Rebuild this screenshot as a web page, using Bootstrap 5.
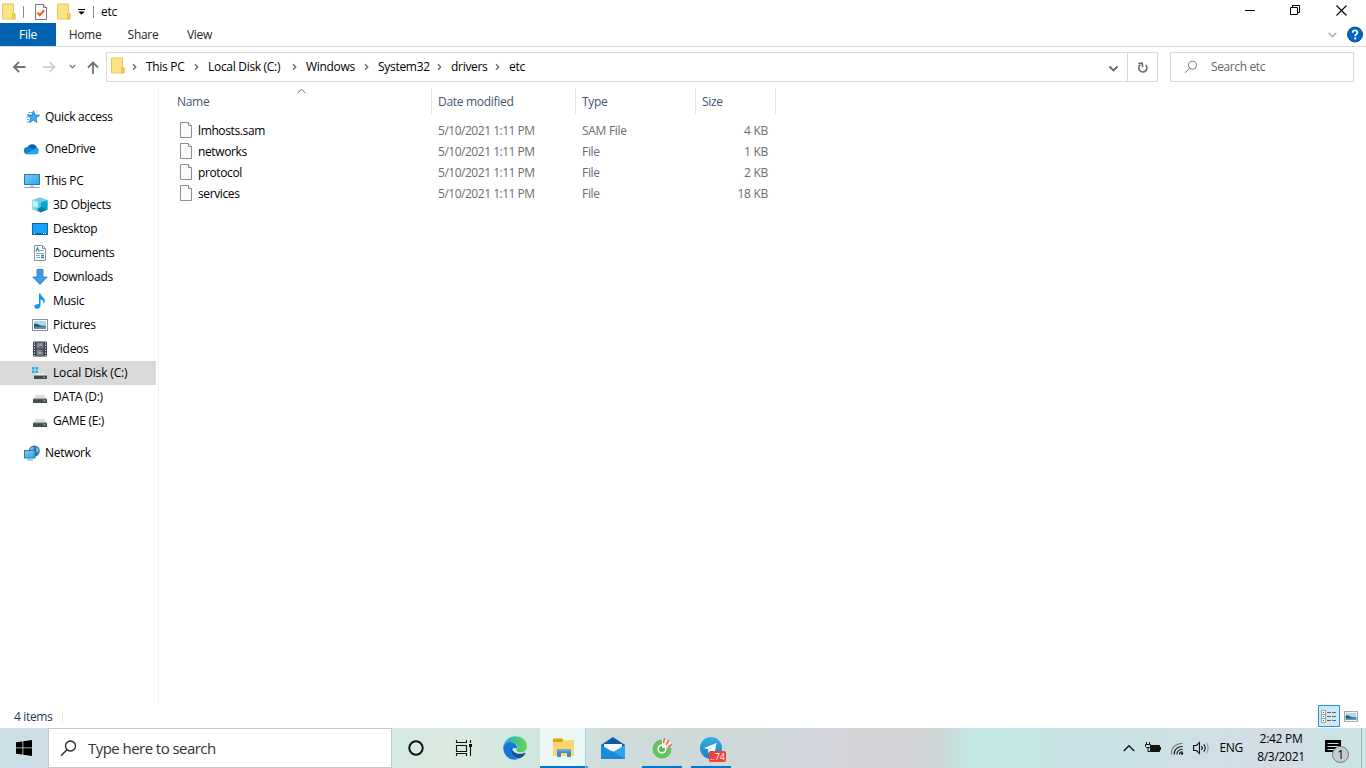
<!DOCTYPE html>
<html lang="en">
   <head>
      <meta charset="UTF-8" />
      <meta name="viewport" content="width=device-width, initial-scale=1.0" />
      <title>etc</title>
      <link rel="stylesheet" href="https://cdn.jsdelivr.net/npm/bootstrap@5.3.0/dist/css/bootstrap.min.css" />
      <style>
         body {
         font-family: "Open Sans", "Noto Sans", sans-serif;
         font-size: 12px;
         line-height: 16px;
         letter-spacing: -0.3px;
         color: #000;
         background: #fff;
         }
         svg { display: block; flex: none; }
         .defs { position: absolute; width: 0; height: 0; }

         /* title bar and ribbon */
         .title-bar { height: 23px; padding: 0 2px; }
         .quick-sep { width: 1px; height: 12px; background: #8a8a8a; }
         .title-tools { gap: 7px; }
         .title-tools .new-folder { margin-left: 1px; }
         .title-tools .end-sep { margin-left: 1px; }
         .sys-btn { width: 46px; height: 21px; }
         .ribbon { height: 24px; border-bottom: 1px solid #dadbdc; color: #262626; }
         .tab-file { width: 56px; background: #0063b1; color: #fff; }
         .tab-item { width: 58px; }
         .tab-item:nth-child(4) { width: 55px; }
         .help-icon { margin: 0 2px 0 8px; }

         /* address row */
         .address-row { height: 41px; padding: 5px 12px 6px 11px; }
         .nav-arrows { width: 95px; }
         .up-arrow { margin-left: -7px; }
         .address-box { border: 1px solid #d9d9d9; width: 1052px; height: 30px; }
         .first-arrow { margin-left: 7px; }
         .crumbs { display: grid; grid-template-columns: 62px 98px 72px 73px 58px auto; margin-left: 9px; }
         .crumb svg { margin-right: 9px; }
         .refresh { width: 30px; height: 28px; border-left: 1px solid #d9d9d9; padding-top: 1px; }
         .search-box { border: 1px solid #d9d9d9; width: 184px; height: 30px; color: #666; padding: 0 0 0 13px; gap: 13px; letter-spacing: -0.38px; }

         /* navigation pane */
         .side-pane { width: 159px; height: 616px; border-right: 1px solid #f3f3f3; padding-top: 17px; }
         .tree-row { height: 24px; width: 156px; padding-left: 24px; gap: 5px; white-space: nowrap; }
         .tree-sub { padding-left: 32px; }
         .tree-row.current { background: #d9d9d9; letter-spacing: -0.15px; }
         .tree-gap { margin-bottom: 8px; }

         /* file list */
         .file-pane { padding-left: 12px; }
         .file-table { table-layout: fixed; width: 605px; border-collapse: separate; border-spacing: 0; }
         .file-table th { height: 26px; font-weight: 400; color: #43566f; border-right: 1px solid #e5e5e5; padding: 2px 6px 0; position: relative; }
         .file-table td { height: 21px; padding: 0 8px 0 6px; color: #6d6d6d; white-space: nowrap; }
         .file-table td:first-child { color: #000; padding-left: 9px; letter-spacing: -0.38px; }
         .file-table td:nth-child(2) { letter-spacing: -0.48px; }
         .file-table td svg { margin: 0 6px 2px 0; }
         .file-table .spacer td { height: 6px; }
         .sort-mark { position: absolute; left: 126px; top: 0; }

         /* status bar */
         .status-bar { height: 24px; padding: 0 8px 0 14px; color: #1e395b; letter-spacing: -0.35px; }
         .status-bar > span { padding-top: 1px; }
         .status-sep { width: 1px; height: 11px; background: #e8e8e8; margin: 1px 0 0 10px; }
         .view-on { width: 22px; height: 22px; background: #cce8f5; border: 1px solid #2a94cf; }

         /* taskbar */
         .taskbar {
         height: 40px;
         background: linear-gradient(90deg, #cbdde5 0, #cddfe5 48px, #d3ebe4 392px, #dcebe1 445px, #d2e7e0 525px, #cfdbda 620px, #cfd8d9 770px, #d2d7df 790px, #d5d4d9 850px, #d4d4d8 915px, #ccd9d9 945px, #c2e6e2 968px, #c3e6e2 1045px, #c9e0e5 1060px, #c9e1e5 1125px, #cee0e6 1200px, #d3dce5 1280px, #cbe2e5 1325px, #cbe4e6 1366px);
         }
         .start-btn { width: 48px; }
         .task-search { width: 344px; background: #fff; border: 1px solid #c8c8c8; font-size: 15px; color: #333; letter-spacing: -0.55px; padding-left: 11px; gap: 11px; }
         .task-btn { width: 48px; }
         .task-btn.shift { padding-right: 2px; }
         .task-open { width: 40px; margin-right: 9px; border-bottom: 2px solid #0078d7; padding-top: 2px; }
         .task-open.first { margin-left: 1px; }
         .task-active { width: 45px; background: #ebf6f7; border-bottom: 2px solid #0078d7; padding: 2px 0 0 3px; }
         .task-stack { width: 3px; background: #c8e5ea; border-left: 1px solid #b4cfd4; border-bottom: 2px solid #4ba0dc; margin-right: 1px; }
         .count-badge { position: absolute; right: 5px; bottom: 4px; background: #f0413a; color: #fff; font-size: 9px; line-height: 11px; border-radius: 2px; padding: 0 1px; width: 17px; text-align: center; letter-spacing: 0; }
         .tray { gap: 9px; }
         .clock { width: 60px; line-height: 18px; text-align: center; margin-left: -2px; padding-left: 2px; }
         .notice { width: 51px; position: relative; margin-left: -9px; }
         .notice svg { margin: 12px 0 0 15px; }
         .notice-count { position: absolute; left: 22px; top: 18px; width: 17px; height: 17px; border-radius: 50%; background: #c6cbce; border: 1px solid #777; text-align: center; line-height: 15px; }
         .show-desktop { width: 5px; border-left: 1px solid #9eb4b8; margin-left: -9px; }
      </style>
   </head>
   <body class="vh-100 overflow-hidden d-flex flex-column">
      <svg class="defs">
         <defs>
            <linearGradient id="g-edge" x1="0" y1="0.2" x2="1" y2="0.2"><stop offset="0" stop-color="#1aa5dd" /><stop offset="1" stop-color="#68d84f" /></linearGradient>
            <linearGradient id="g-cube" x1="0" x2="1"><stop offset="0" stop-color="#9be3ec" /><stop offset="1" stop-color="#4fc3da" /></linearGradient>
            <linearGradient id="g-screen" x1="0" x2="1" y2="1"><stop offset="0" stop-color="#7ccbfb" /><stop offset="1" stop-color="#2ba3f3" /></linearGradient>
            <linearGradient id="g-tele" y2="1" x2="0"><stop offset="0" stop-color="#37aee2" /><stop offset="1" stop-color="#1784bd" /></linearGradient>
         </defs>
         <symbol id="folder" viewBox="0 0 14 16">
            <path d="M.5.5h11v10H13v5H.5z" fill="#fde482" stroke="#eac75c" />
            <path d="M10.500 15.500v-5H13v5z" fill="#f5d263" stroke="#deb545" stroke-width=".8" />
         </symbol>
         <symbol id="crumb-arrow" viewBox="0 0 5 8">
            <path d="M1 1.200 3.700 4 1 6.800" fill="none" stroke="#6b6b6b" stroke-width="1.400" />
         </symbol>
         <symbol id="page" viewBox="0 0 12 16">
            <path d="M.5.5h8l3 3v12H.5z" fill="#f9fafa" stroke="#8b8f8d" />
            <path d="M8.500.5v3h3" fill="#fff" stroke="#8b8f8d" />
         </symbol>
         <symbol id="drive" viewBox="0 0 16 16">
            <path d="M3.500 6h9L15 10H1z" fill="#dcdedf" />
            <rect x="1" y="9.700" width="14" height="4.300" rx=".6" fill="#454b4b" />
            <path d="M1 10h14" stroke="#858989" stroke-width=".6" />
            <rect x="11.300" y="11.300" width="2" height="1.200" fill="#56e05b" />
         </symbol>
         <symbol id="picture" viewBox="0 0 16 12">
            <rect x=".5" y=".5" width="15" height="11" fill="#fff" stroke="#8d9295" />
            <path d="M2 2h12v8H2z" fill="#a9d6f5" />
            <path d="M2 5c3-1 5 1 7 1.500s4 0 5 .5v3H2z" fill="#2f6583" />
            <path d="M2 8.500 14 7.500V10H2z" fill="#5d96c6" />
            <path d="M2 5c2-.6 4 .8 5 2H2z" fill="#2f5b49" />
         </symbol>
      </svg>

      <!-- title bar -->
      <header class="title-bar d-flex align-items-center">
         <div class="title-tools d-flex align-items-center">
            <svg width="14" height="17"><use href="#folder" /></svg>
            <div class="quick-sep"></div>
            <svg width="18" height="17" viewBox="0 0 18 17">
               <path d="M4.500 1.500h8l3 3v12h-11z" fill="#fbfbfb" stroke="#777" />
               <path d="M12.500 1.500v3h3" fill="#fff" stroke="#777" />
               <path d="m6.500 9.500 2.300 2.700 4.400-5" fill="none" stroke="#ea5f1e" stroke-width="2" />
            </svg>
            <svg class="new-folder" width="14" height="17"><use href="#folder" /></svg>
            <svg width="7" height="7" viewBox="0 0 7 7"><path d="M0 1.500h7" stroke="#000" /><path d="M.2 3.500h6.600L3.500 6.800z" /></svg>
            <div class="quick-sep end-sep"></div>
            <span>etc</span>
         </div>
         <div class="ms-auto d-flex align-self-start">
            <div class="sys-btn d-flex align-items-center justify-content-center"><svg width="11" height="11"><path d="M1 5.500h10" stroke="#000" /></svg></div>
            <div class="sys-btn d-flex align-items-center justify-content-center"><svg width="11" height="11"><path d="M.5 2.500h7v7h-7zM2.500 2.500v-2h7v7h-2" fill="none" stroke="#000" /></svg></div>
            <div class="sys-btn d-flex align-items-center justify-content-center"><svg width="11" height="11"><path d="m.5.500 10 10m0-10-10 10" stroke="#000" stroke-width="1.100" /></svg></div>
         </div>
      </header>

      <!-- ribbon tabs -->
      <nav class="ribbon d-flex">
         <div class="tab-file d-flex align-items-center justify-content-center">File</div>
         <div class="tab-item d-flex align-items-center justify-content-center">Home</div>
         <div class="tab-item d-flex align-items-center justify-content-center">Share</div>
         <div class="tab-item d-flex align-items-center justify-content-center">View</div>
         <div class="ms-auto d-flex align-items-center">
            <svg width="9" height="6" viewBox="0 0 9 6"><path d="m.7.8 3.800 3.800L8.300.8" fill="none" stroke="#9b9b9b" stroke-width="1.200" /></svg>
            <svg class="help-icon" width="19" height="18" viewBox="1 0 19 18">
               <circle cx="11" cy="8.500" r="7.500" fill="#0066c0" stroke="#0a4f91" />
               <path d="M8.700 6.700c0-3 4.700-3 4.700-.2 0 1.700-2.200 1.700-2.200 3.800" fill="none" stroke="#fff" stroke-width="1.800" />
               <rect x="10.200" y="11.500" width="2" height="1.900" fill="#fff" />
            </svg>
         </div>
      </nav>

      <!-- address row -->
      <div class="address-row d-flex">
         <div class="nav-arrows d-flex align-items-center">
            <svg width="82" height="16" viewBox="0 0 82 16" fill="none" stroke-width="1.800">
               <path d="M14.500 8H3m5-5L3 8l5 5" stroke="#727272" />
               <path d="M32 8h11.500m-5-5 5 5-5 5" stroke="#d3d3d3" />
               <path d="m58.800 6 2.700 2.700L64.200 6" stroke="#808080" stroke-width="1.500" />
            </svg>
            <svg class="up-arrow" width="14" height="16" viewBox="0 0 14 16"><path d="M7 15V3.500M2 8.500l5-5 5 5" fill="none" stroke="#727272" stroke-width="1.800" /></svg>
         </div>
         <div class="address-box d-flex align-items-center">
            <svg class="ms-1 mb-1" width="14" height="17"><use href="#folder" /></svg>
            <svg class="first-arrow" width="5" height="8"><use href="#crumb-arrow" /></svg>
            <div class="crumbs">
               <div class="crumb d-flex align-items-center justify-content-between">This PC<svg width="5" height="8"><use href="#crumb-arrow" /></svg></div>
               <div class="crumb d-flex align-items-center justify-content-between">Local Disk (C:)<svg width="5" height="8"><use href="#crumb-arrow" /></svg></div>
               <div class="crumb d-flex align-items-center justify-content-between">Windows<svg width="5" height="8"><use href="#crumb-arrow" /></svg></div>
               <div class="crumb d-flex align-items-center justify-content-between">System32<svg width="5" height="8"><use href="#crumb-arrow" /></svg></div>
               <div class="crumb d-flex align-items-center justify-content-between">drivers<svg width="5" height="8"><use href="#crumb-arrow" /></svg></div>
               <div>etc</div>
            </div>
            <svg class="ms-auto me-2 mt-1" width="11" height="8" viewBox="0 0 11 8"><path d="m1.500 1.500 4 4 4-4" fill="none" stroke="#666" stroke-width="1.800" /></svg>
            <div class="refresh d-flex align-items-center justify-content-center">
               <svg width="12" height="12" viewBox="0 0 12 12" fill="none" stroke="#6b6b6b" stroke-width="1.600"><path d="M8.600 2.800A4.100 4.100 0 1 1 3 2.900" /><path d="M1.500 1.200h4v4" transform="rotate(-5 4 4)" /></svg>
            </div>
         </div>
         <div class="search-box d-flex align-items-center ms-auto">
            <svg width="14" height="14" viewBox="0 0 14 14" fill="none" stroke="#777"><circle cx="8.500" cy="5.300" r="4" /><path d="M5.700 8.200 1 12.800" /></svg>
            <span>Search etc</span>
         </div>
      </div>

      <main class="d-flex flex-grow-1">
         <!-- navigation pane -->
         <aside class="side-pane flex-shrink-0">
            <div class="tree-row tree-gap d-flex align-items-center">
               <svg width="16" height="16" viewBox="0 0 16 16"><path d="m9.500 1.800 1.500 4.200 4.500.3-3.500 2.700 1 4.500-3.700-2.400-3.900 2.400 1.300-4.400-3.100-2.800 4.300-.2z" fill="#3dabf5" stroke="#167abd" stroke-width=".8" /><path d="M4.500 3.500H8M3 5.500h2.500M2 8h3M3 10.500h2M2.500 13h2.500" stroke="#4fa8e0" stroke-width=".9" /></svg>
               Quick access
            </div>
            <div class="tree-row tree-gap d-flex align-items-center">
               <svg width="16" height="16" viewBox="0 0 16 16"><path d="M3.500 6a5.200 5.200 0 0 1 9.300.5L15 9 3 12z" fill="#0e5fb4" /><path d="M3.500 13.300A3.600 3.600 0 0 1 3.500 6c2-.3 3.500.3 5 1.500L12 13z" fill="#1680d3" /><path d="M2 13 12 7a3.400 3.400 0 0 1 1 6.300H3z" fill="#29a8ea" /></svg>
               OneDrive
            </div>
            <div class="tree-row d-flex align-items-center">
               <svg width="16" height="16" viewBox="0 0 16 16"><rect x=".5" y="1.500" width="15" height="10" fill="url(#g-screen)" stroke="#3b7894" /><path d="M6 13h4M0 14.500h16" stroke="#92a4ae" /></svg>
               This PC
            </div>
            <div class="tree-row tree-sub d-flex align-items-center">
               <svg width="16" height="16" viewBox="0 0 16 16"><path d="m8 .5 7.500 2.500L9 5.500 0 3z" fill="#69d1e2" /><path d="m0 3 8.500 2.500v10L0 12.500z" fill="url(#g-cube)" /><path d="m8.500 5.500 7.200-2.500v9.500l-7.200 3z" fill="#09a5cc" /><path d="m1 4 5 1.500v5L1 9z" fill="#c8f3f5" /><path d="m5 12 4-2 6.500 2.500-7 3z" fill="#057f9f" /></svg>
               3D Objects
            </div>
            <div class="tree-row tree-sub d-flex align-items-center">
               <svg width="16" height="16" viewBox="0 0 16 16"><rect x=".5" y="2.500" width="15" height="11" fill="#16a0fa" stroke="#0a67ab" /><path d="M1 12.500h14" stroke="#0965aa" /><path d="M2 12.500h1m8 0h1m1 0h1" stroke="#fff" /></svg>
               Desktop
            </div>
            <div class="tree-row tree-sub d-flex align-items-center">
               <svg width="16" height="16" viewBox="0 0 16 16"><path d="M2.500.5h8l3 3v12h-11z" fill="#fff" stroke="#8d9295" /><path d="M10.500.5v3h3" fill="none" stroke="#8d9295" /><path d="M7.500 5.500H12M4 8.500h8M4 10.500h4M4 12.500h4" stroke="#8aa4b7" /><path d="M4 6.500 5.500 3 7 6.500M9 10.500h3m-3 2h3" stroke="#2789c9" fill="none" stroke-width="1.300" /></svg>
               Documents
            </div>
            <div class="tree-row tree-sub d-flex align-items-center">
               <svg width="16" height="16" viewBox="0 0 16 16"><path d="M5 .5h6v7.500h4.300L8 15.500.7 8H5z" fill="#3f9be8" stroke="#2b78bb" stroke-width=".8" /></svg>
               Downloads
            </div>
            <div class="tree-row tree-sub d-flex align-items-center">
               <svg width="16" height="16" viewBox="0 0 16 16"><path d="M7 .5h1.500c.3 3 4.800 4 4.300 8-.3 1.300-.8 2-1.300 2.500.4-3-1-4-3-4.500V13c0 1.700-1.800 2.700-3.500 2.700S2.300 14.700 2.300 13.500 4 11 7 11z" fill="#1296ee" /></svg>
               Music
            </div>
            <div class="tree-row tree-sub d-flex align-items-center">
               <svg width="16" height="12"><use href="#picture" /></svg>
               Pictures
            </div>
            <div class="tree-row tree-sub d-flex align-items-center">
               <svg width="16" height="16" viewBox="0 0 16 16"><rect x="1" y=".5" width="14" height="15" fill="#373a3d" /><path d="M2.500 1v14M13.500 1v14" stroke="#e5e5e5" stroke-width="1.200" stroke-dasharray="1.300 1.300" /><path d="M4.500 1.500h7v6h-7zm0 7h7v6h-7z" fill="#5d88c0" /><path d="M6 5.500 8 2l2.500 3-2.500 1zM6 11l2 2.500 2.500-3.500z" fill="#e59822" /><path d="M7 5h3v1.500H7zm2 4h2v2H9z" fill="#bd4026" /></svg>
               Videos
            </div>
            <div class="tree-row tree-sub current d-flex align-items-center">
               <svg width="16" height="16" viewBox="0 0 16 16"><path d="M0 2h2.500v2.500H0zm3.500 0H6v2.500H3.500zM0 5.500h2.500V8H0zm3.500 0H6V8H3.500z" fill="#11b7ea" /><path d="M4 8.500h9l2 2.500H2z" fill="#eceded" /><rect x="2" y="10.500" width="13" height="3.500" fill="#454b4b" /><rect x="11" y="11.800" width="2" height="1" fill="#56e05b" /></svg>
               Local Disk (C:)
            </div>
            <div class="tree-row tree-sub d-flex align-items-center">
               <svg width="16" height="16"><use href="#drive" /></svg>
               DATA (D:)
            </div>
            <div class="tree-row tree-sub tree-gap d-flex align-items-center">
               <svg width="16" height="16"><use href="#drive" /></svg>
               GAME (E:)
            </div>
            <div class="tree-row d-flex align-items-center">
               <svg width="16" height="16" viewBox="0 0 16 16"><circle cx="10.300" cy="6" r="5.500" fill="#2873a8" /><path d="M6 4c2-3 4-2 4-1S8 5 7 7M12 2c3 1 3 4 2 6l-2-2z" fill="#87b9d7" /><rect x=".5" y="5.500" width="10.500" height="7.500" fill="url(#g-screen)" stroke="#3579a2" /><path d="M5.700 13v1.500M3 15h6" stroke="#75a8c8" /></svg>
               Network
            </div>
         </aside>

         <!-- file list -->
         <section class="file-pane">
            <table class="file-table">
               <colgroup>
                  <col style="width: 261px" />
                  <col style="width: 144px" />
                  <col style="width: 120px" />
                  <col style="width: 80px" />
               </colgroup>
               <thead>
                  <tr>
                     <th>Name<svg class="sort-mark" width="9" height="6" viewBox="0 0 9 6"><path d="M.7 5 4.500 1.200 8.300 5" fill="none" stroke="#666" /></svg></th>
                     <th>Date modified</th>
                     <th>Type</th>
                     <th>Size</th>
                  </tr>
               </thead>
               <tbody>
                  <tr class="spacer"><td colspan="4"></td></tr>
                  <tr>
                     <td><div class="d-flex align-items-center"><svg width="12" height="16"><use href="#page" /></svg>lmhosts.sam</div></td>
                     <td>5/10/2021 1:11 PM</td>
                     <td>SAM File</td>
                     <td class="text-end">4 KB</td>
                  </tr>
                  <tr>
                     <td><div class="d-flex align-items-center"><svg width="12" height="16"><use href="#page" /></svg>networks</div></td>
                     <td>5/10/2021 1:11 PM</td>
                     <td>File</td>
                     <td class="text-end">1 KB</td>
                  </tr>
                  <tr>
                     <td><div class="d-flex align-items-center"><svg width="12" height="16"><use href="#page" /></svg>protocol</div></td>
                     <td>5/10/2021 1:11 PM</td>
                     <td>File</td>
                     <td class="text-end">2 KB</td>
                  </tr>
                  <tr>
                     <td><div class="d-flex align-items-center"><svg width="12" height="16"><use href="#page" /></svg>services</div></td>
                     <td>5/10/2021 1:11 PM</td>
                     <td>File</td>
                     <td class="text-end">18 KB</td>
                  </tr>
               </tbody>
            </table>
         </section>
      </main>

      <!-- status bar -->
      <div class="status-bar d-flex align-items-center">
         <span>4 items</span>
         <div class="status-sep"></div>
         <div class="view-on d-flex align-items-center justify-content-center ms-auto">
            <svg width="16" height="13" viewBox="0 0 16 13"><path d="M.5.500h4v12h-4zm0 4h4m-4 4h4" fill="#fff" stroke="#a0a0a0" /><path d="M6 2.500h4m1 0h4m-9 4h4m1 0h4m-9 4h4m1 0h4" stroke="#666" /><path d="M2 2.500h1" stroke="#555" /><path d="M2 6.500h1" stroke="#1477d4" /><path d="M2 10.500h1" stroke="#e01b1b" /></svg>
         </div>
         <svg class="ms-1" width="14" height="11"><use href="#picture" /></svg>
      </div>

      <!-- taskbar -->
      <footer class="taskbar d-flex flex-shrink-0">
         <div class="start-btn d-flex align-items-center justify-content-center">
            <svg width="16" height="16" viewBox="0 0 16 16"><path d="M0 2.300 6.500 1.400v6.100H0zM7.300 1.300 16 0v7.500H7.300zM0 8.300h6.500v6.200L0 13.700zM7.300 8.300H16V16l-8.700-1.300z" /></svg>
         </div>
         <div class="task-search d-flex align-items-center">
            <svg width="17" height="17" viewBox="0 0 17 17" fill="none" stroke="#222" stroke-width="1.300"><circle cx="10.500" cy="6" r="5" /><path d="m7 9.700-6 6" /></svg>
            <span>Type here to search</span>
         </div>
         <div class="task-btn d-flex align-items-center justify-content-center">
            <svg width="16" height="16"><circle cx="8" cy="8" r="6.700" fill="none" stroke="#111" stroke-width="2" /></svg>
         </div>
         <div class="task-btn shift d-flex align-items-center justify-content-center">
            <svg width="17" height="16" viewBox="0 0 17 16"><path d="M1.500 0v2.500h10V0M1.500 5.500h10v6h-10zM1.500 16v-2.500h10V16M15.500 0v3m0 4v9" fill="none" stroke="#111" stroke-width="1.100" /><path d="M14 4h3v3h-3z" /></svg>
         </div>
         <div class="task-btn shift d-flex align-items-center justify-content-center ms-1">
            <svg width="24" height="24" viewBox="0 0 24 24">
               <path d="M.3 11.500C1 5 6 .2 12.300.2 19.500.2 24 5 24 10.200c0 4-3 6-6.500 6-3 0-4.500-1.200-4-2.200 3-3-1-8-6-7C4 7.500 1.500 9 .3 11.500z" fill="url(#g-edge)" />
               <path d="M.2 12C1 8 5 5.800 9 6.500c4 .8 6 4 4.700 6.500-1-1.500-5-1.500-5 2.500 0 3.500 3 7 7 7.200C9 26 .8 21 .2 12z" fill="#1578d4" />
               <path d="M9 11c-2.500 5 1 11 7 11.500 3-.8 5-2.500 6.300-4.800.5-.8-.4-1.200-1-.8C16 19.300 8.500 17 9 11z" fill="#174f9e" />
            </svg>
         </div>
         <div class="task-active d-flex align-items-center justify-content-center">
            <svg width="22" height="20" viewBox="0 0 22 20"><path d="M1 1h7.500l1.500 1.500h11V18H1z" fill="#fcd163" /><path d="M0 1.200C0 .6.500.5 1 .5h8l1.500 1.500-2 2H0z" fill="#dda50c" /><path d="M0 4h9l1.500-1.500H21V18H0z" fill="#ffd66d" /><path d="M4 19v-7.500h14V19h-4v-4H8v4z" fill="#3c8bd9" /><path d="M4 11.500h14v2H4z" fill="#5ca7e8" /></svg>
         </div>
         <div class="task-stack"></div>
         <div class="task-btn d-flex align-items-center justify-content-center me-1">
            <svg width="24" height="22" viewBox="0 0 24 22"><path d="M0 8 12 0l12 8v13H0z" fill="#075da9" /><path d="M3 7h18v6l-9 4-9-4z" fill="#f4f7f9" /><path d="M0 8v14h24z" fill="#168fe0" /><path d="M24 8v14H0z" fill="#2aa5ec" /><path d="M0 22h24L11 14z" fill="#1c88d6" /></svg>
         </div>
         <div class="task-open first d-flex align-items-center justify-content-center">
            <svg width="22" height="22" viewBox="0 0 22 22"><circle cx="11" cy="12" r="7" fill="none" stroke="#62c55c" stroke-width="5" /><circle cx="11" cy="12" r="4.500" fill="#fff" /><circle cx="11" cy="12" r="3" fill="#52b94c" /><path d="m11 11 0-10 9 4 1 5z" fill="#f4f4ef" /><path d="m12.500 6 1-5m1.500 7 3-5m-1 7 4-2.500" stroke="#ef6652" stroke-width="1.600" /></svg>
         </div>
         <div class="task-open d-flex align-items-center justify-content-center position-relative">
            <svg width="22" height="22" viewBox="0 0 22 22"><circle cx="11" cy="11" r="11" fill="url(#g-tele)" /><path d="m4 11 12.500-5-2 11-4-3-2 2-.5-3.700z" fill="#fff" /><path d="m8 12.300 6-4-5 5.200-.5 2.500z" fill="#b9d9eb" /></svg>
            <span class="count-badge">..74</span>
         </div>

         <!-- tray -->
         <div class="tray ms-auto d-flex align-items-center">
            <svg width="12" height="8" viewBox="0 0 12 8"><path d="m.7 7 5.300-5.300L11.300 7" fill="none" stroke="#111" stroke-width="1.300" /></svg>
            <svg width="17" height="12" viewBox="-1 0 17 12"><path d="M5.500 3.500h9v6h-9z" fill="#111" stroke="#111" /><path d="M15.500 5v3M1.500 0v2m3-2v2M.5 2.500h5v2l-1 1h-3l-1-1zM3 5.500v4h2" fill="none" stroke="#111" /></svg>
            <svg width="14" height="14" viewBox="0 0 14 14" fill="none" stroke="#111" stroke-width="1.100"><path d="M1.500 13.500C.5 7 6 2 12.500 2.500" stroke="#777" /><path d="M4.200 13.500c-.5-5 4-8.500 8.500-8M7 13.500c-.3-3 2-5.500 5.700-5.200M9.500 13.500c-.3-1.500 1-3 3-2.700" /><circle cx="12" cy="12.500" r="1.300" fill="#111" stroke="none" /></svg>
            <svg width="17" height="14" viewBox="0 0 17 14" fill="none" stroke="#111" stroke-width="1.100"><path d="M.6 4.500h2.900L6.500 1.500v11l-3-3H.6z" /><path d="M8.500 5q1.600 2 0 4M10.700 3.300q3 3.700 0 7.400" /><path d="M13 1.500q4.500 5.500 0 11" stroke="#999" /></svg>
            <span>ENG</span>
            <div class="clock">2:42 PM<br />8/3/2021</div>
            <div class="notice align-self-stretch">
               <svg width="16" height="17" viewBox="0 0 16 17"><path d="M0 0h16v12h-4l-4 4v-4H0z" /><path d="M2.500 3.500h11m-11 3h11m-11 3h7" stroke="#ccdfe3" /></svg>
               <span class="notice-count">1</span>
            </div>
            <div class="show-desktop align-self-stretch"></div>
         </div>
      </footer>
      <script src="https://cdn.jsdelivr.net/npm/bootstrap@5.3.0/dist/js/bootstrap.bundle.min.js"></script>
   </body>
</html>
